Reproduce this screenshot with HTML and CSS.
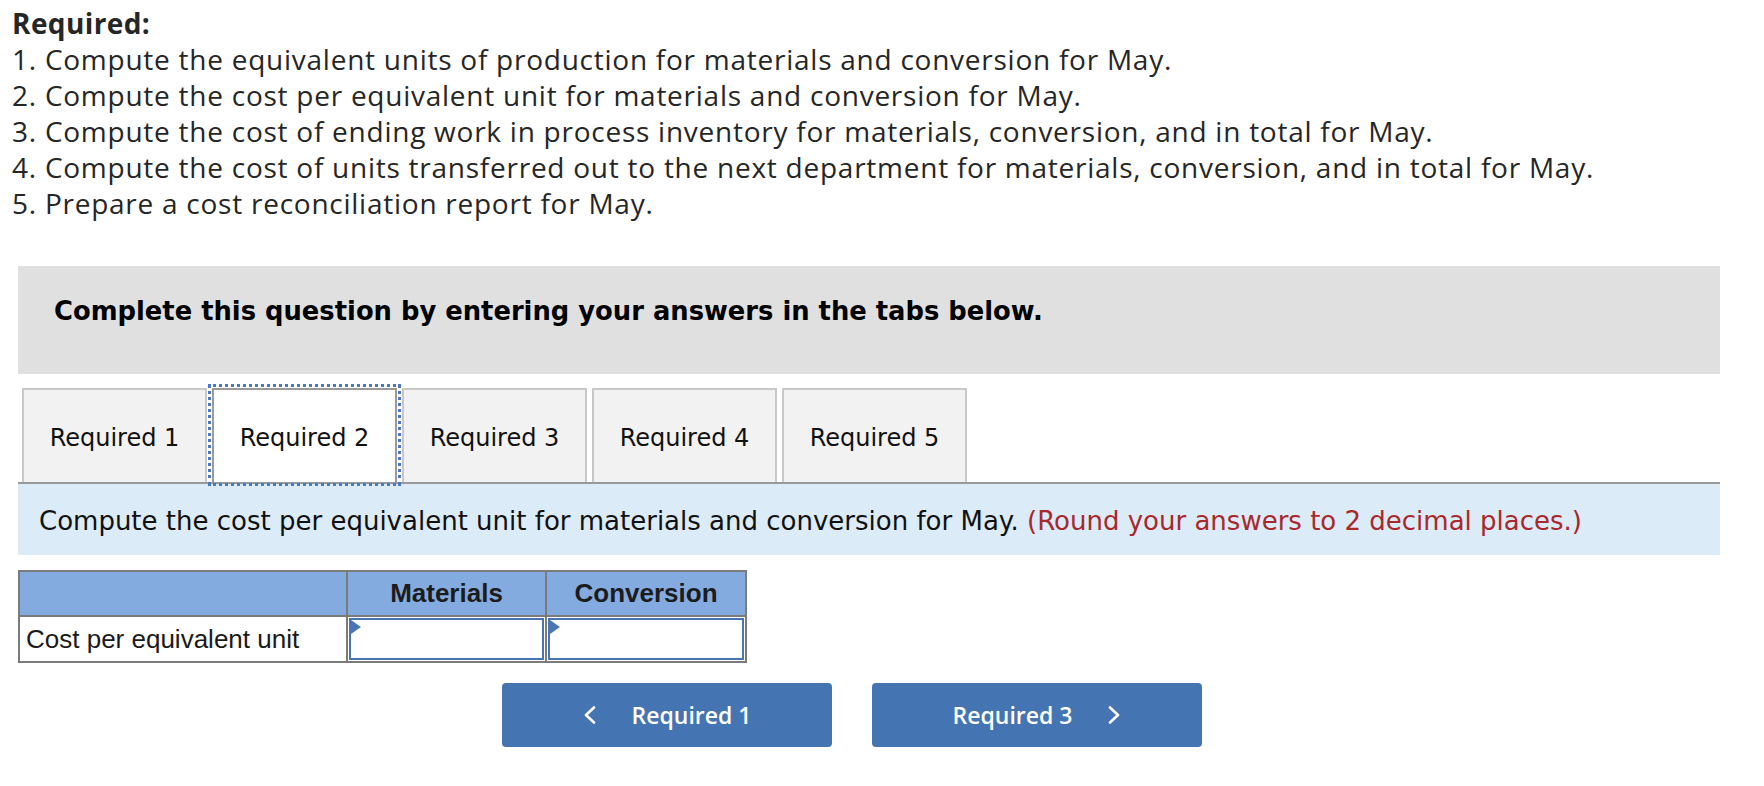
FILE: index.html
```html
<!DOCTYPE html>
<html lang="en">
<head>
<meta charset="utf-8">
<title>Required</title>
<link rel="stylesheet" href="styles.css">
</head>
<body>
<div class="page">
  <div class="required">
    <p class="req-title">Required:</p>
    <p>1. Compute the equivalent units of production for materials and conversion for May.</p>
    <p>2. Compute the cost per equivalent unit for materials and conversion for May.</p>
    <p>3. Compute the cost of ending work in process inventory for materials, conversion, and in total for May.</p>
    <p>4. Compute the cost of units transferred out to the next department for materials, conversion, and in total for May.</p>
    <p>5. Prepare a cost reconciliation report for May.</p>
  </div>

  <div class="prompt">Complete this question by entering your answers in the tabs below.</div>

  <div class="tabs">
    <div class="tab">Required 1</div>
    <div class="tab active">Required 2</div>
    <div class="tab">Required 3</div>
    <div class="tab">Required 4</div>
    <div class="tab">Required 5</div>
  </div>

  <div class="instructions">Compute the cost per equivalent unit for materials and conversion for May.&nbsp;<span class="note">(Round your answers to 2 decimal places.)</span></div>

  <table class="grid">
    <colgroup>
      <col class="c1"><col class="c2"><col class="c3">
    </colgroup>
    <thead>
      <tr><th></th><th>Materials</th><th>Conversion</th></tr>
    </thead>
    <tbody>
      <tr>
        <td class="label">Cost per equivalent unit</td>
        <td class="entry"><div class="input"></div></td>
        <td class="entry"><div class="input"></div></td>
      </tr>
    </tbody>
  </table>

  <div class="nav">
    <button class="nav-btn" type="button">
      <svg class="chev" width="13" height="18" viewBox="0 0 13 18"><polyline points="11,1.5 3,9 11,16.5" fill="none" stroke="#fff" stroke-width="2.6" stroke-linecap="round" stroke-linejoin="round"/></svg>
      <span>Required 1</span>
    </button>
    <button class="nav-btn" type="button">
      <span>Required 3</span>
      <svg class="chev" width="13" height="18" viewBox="0 0 13 18"><polyline points="2,1.5 10,9 2,16.5" fill="none" stroke="#fff" stroke-width="2.6" stroke-linecap="round" stroke-linejoin="round"/></svg>
    </button>
  </div>
</div>
</body>
</html>
```

FILE: styles.css
```css
* { box-sizing: border-box; }

html, body {
  margin: 0;
  padding: 0;
  background: #ffffff;
}

.page {
  padding: 5px 44px 0 12px;
}

.required {
  font-family: "Open Sans", "Liberation Sans", sans-serif;
  font-size: 28px;
  letter-spacing: 0.75px;
  line-height: 36px;
  color: #262626;
}

.required p {
  margin: 0;
}

.req-title {
  font-weight: 700;
  letter-spacing: 0.4px;
}

.prompt {
  margin: 45px 0 0 6px;
  height: 108px;
  background: #e0e0e0;
  padding: 30px 36px 0 36px;
  font-family: "DejaVu Sans", Verdana, sans-serif;
  font-weight: 700;
  font-size: 25.8px;
  line-height: 30px;
  color: #000;
}

.tabs {
  margin: 14px 0 0 6px;
  padding-left: 4px;
  display: flex;
  gap: 5px;
  border-bottom: 2px solid #999999;
}

.tab {
  width: 185px;
  height: 94px;
  padding-top: 4px;
  border: 2px solid #c8c8c8;
  border-bottom: none;
  background: #f2f2f2;
  display: flex;
  align-items: center;
  justify-content: center;
  font-family: "DejaVu Sans", Verdana, sans-serif;
  font-size: 24px;
  color: #111;
}

.tab.active {
  background: #ffffff;
  border-color: #9a9a9a;
  outline: 3px dotted #4a78c2;
  outline-offset: 1px;
}

.instructions {
  margin-left: 6px;
  height: 71px;
  background: #dcebf8;
  padding-left: 21px;
  padding-top: 3px;
  display: flex;
  align-items: center;
  font-family: "DejaVu Sans", Verdana, sans-serif;
  font-size: 26px;
  color: #111;
  white-space: nowrap;
}

.note {
  color: #a8282b;
}

.grid {
  margin: 15px 0 0 6px;
  border-collapse: collapse;
  table-layout: fixed;
  width: 727px;
  font-family: "Liberation Sans", Arial, sans-serif;
  font-size: 26px;
  color: #1a1a1a;
}

.grid col.c1 { width: 328px; }
.grid col.c2 { width: 199px; }
.grid col.c3 { width: 200px; }

.grid th,
.grid td {
  border: 2px solid #7b7b7b;
  padding: 0;
}

.grid th {
  height: 45px;
  background: #84abdf;
  font-weight: 700;
  text-align: center;
  color: #1c1c1c;
}

.grid td {
  height: 46px;
}

.grid td.label {
  padding-left: 6px;
  text-align: left;
}

.grid td.entry {
  padding: 1px;
}

.input {
  position: relative;
  height: 42px;
  border: 2px solid #4a75b5;
  background: #fff;
}

.input::before {
  content: "";
  position: absolute;
  left: 0;
  top: 0;
  border-left: 10px solid #4a76b5;
  border-top: 7px solid transparent;
  border-bottom: 7px solid transparent;
}

.nav {
  margin: 20px 0 0 490px;
  display: flex;
  gap: 40px;
}

.nav-btn {
  width: 330px;
  height: 64px;
  border: none;
  border-radius: 4px;
  background: #4574b3;
  color: #ffffff;
  display: flex;
  align-items: center;
  justify-content: center;
  gap: 36px;
  font-family: "Open Sans", "Liberation Sans", sans-serif;
  font-weight: 600;
  font-size: 23px;
  padding: 0;
}

.chev {
  display: block;
}
```
